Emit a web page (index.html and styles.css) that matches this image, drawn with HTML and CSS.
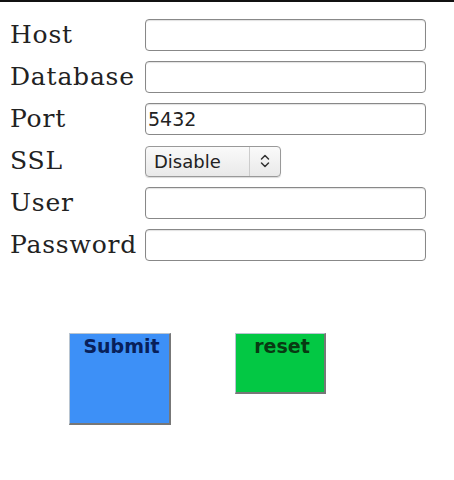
FILE: index.html
```
<!DOCTYPE html>
<html>
<head>
<meta charset="utf-8">
<link rel="stylesheet" href="styles.css">
</head>
<body>
<form class="form">
  <div class="fields">
    <label class="label" for="host">Host</label>
    <input class="input" id="host" type="text">
    <label class="label" for="db">Database</label>
    <input class="input" id="db" type="text">
    <label class="label" for="port">Port</label>
    <input class="input" id="port" type="text" value="5432">
    <label class="label" for="ssl">SSL</label>
    <div class="select" id="ssl">
      <span class="select-text">Disable</span>
      <span class="select-arrow">
        <svg width="10" height="14" viewBox="0 0 10 14"><path d="M1.5 5 L5 1.5 L8.5 5 M1.5 9 L5 12.5 L8.5 9" fill="none" stroke="#333" stroke-width="1.5" stroke-linecap="round" stroke-linejoin="round"/></svg>
      </span>
    </div>
    <label class="label" for="user">User</label>
    <input class="input" id="user" type="text">
    <label class="label" for="pw">Password</label>
    <input class="input" id="pw" type="password">
  </div>
  <div class="actions">
    <button class="btn btn-submit" type="button">Submit</button>
    <button class="btn btn-reset" type="button">reset</button>
  </div>
</form>
</body>
</html>
```
FILE: styles.css
```
html, body {
  margin: 0;
  padding: 0;
  background: #fff;
}
body {
  width: 454px;
  height: 480px;
  overflow: hidden;
  border-top: 2px solid #111;
  box-sizing: border-box;
}
.form {
  padding: 17px 0 0 10px;
}
.fields {
  display: grid;
  grid-template-columns: 135px 281px;
  row-gap: 10px;
  align-items: center;
}
.label {
  font-family: "DejaVu Serif", serif;
  font-size: 25px;
  color: #222;
  line-height: 32px;
  white-space: nowrap;
  letter-spacing: 0.8px;
}
.input {
  box-sizing: border-box;
  height: 32px;
  width: 281px;
  margin: 0;
  border: 1px solid #888;
  border-radius: 4px;
  box-shadow: inset 0 1px 1px rgba(0,0,0,0.12);
  padding: 0 2px;
  font-family: "DejaVu Sans", sans-serif;
  font-size: 19px;
  color: #222;
  background: #fff;
}
.select {
  box-sizing: border-box;
  width: 136px;
  height: 31px;
  border: 1px solid #999;
  border-radius: 4px;
  background: linear-gradient(#fafafa, #e9e9e9);
  box-shadow: 0 1px 1px rgba(0,0,0,0.15);
  display: flex;
  align-items: stretch;
}
.select-text {
  flex: 1;
  display: flex;
  align-items: center;
  padding-left: 8px;
  font-family: "DejaVu Sans", sans-serif;
  font-size: 18px;
  color: #222;
  border-right: 1px solid #ccc;
}
.select-arrow {
  width: 30px;
  display: flex;
  align-items: center;
  justify-content: center;
}
.actions {
  display: flex;
  align-items: flex-start;
  gap: 64px;
  padding: 72px 0 0 59px;
}
.btn {
  box-sizing: border-box;
  display: flex;
  justify-content: center;
  align-items: flex-start;
  margin: 0;
  padding: 1px 0 0 4px;
  font-family: "DejaVu Sans", sans-serif;
  font-weight: bold;
  font-size: 19px;
  line-height: 22px;
  border-style: solid;
  border-width: 1px 2px 2px 1px;
  border-color: #b8c4d0 #777 #777 #b8c4d0;
  border-radius: 0;
}
.btn-submit {
  width: 102px;
  height: 92px;
  background: #3d90f7;
  color: #08205a;
}
.btn-reset {
  width: 91px;
  height: 61px;
  background: #03c844;
  color: #083a12;
}
```
